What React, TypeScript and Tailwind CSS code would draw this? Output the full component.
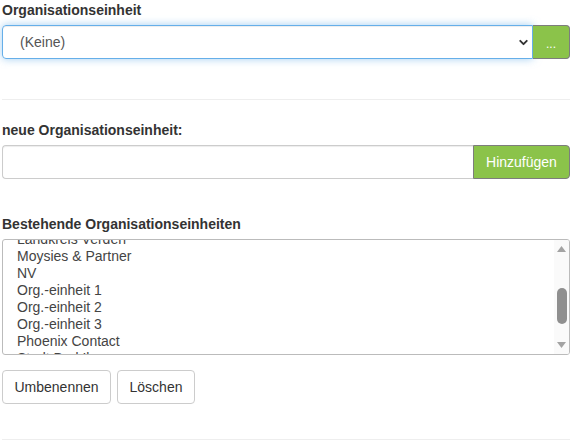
import { ChevronDown } from 'lucide-react';

const units = [
  'Landkreis Verden',
  'Moysies & Partner',
  'NV',
  'Org.-einheit 1',
  'Org.-einheit 2',
  'Org.-einheit 3',
  'Phoenix Contact',
  'Stadt Bad Iburg',
];

function Label({ children }: { children: React.ReactNode }) {
  return <label className="block h-5 text-[14px] font-bold leading-5 text-[#333]">{children}</label>;
}

function Scrollbar() {
  return (
    <div className="flex w-[15px] shrink-0 flex-col items-center bg-[#fafafa] pt-[6px] pb-[6px]">
      <svg width="9" height="6" viewBox="0 0 9 6">
        <path d="M0 6 L4.5 0 L9 6 Z" fill="#a3a3a3" />
      </svg>
      <div className="mt-[36px] h-[36px] w-[10px] rounded-full bg-[#8f8f8f]" />
      <div className="flex-1" />
      <svg width="9" height="6" viewBox="0 0 9 6">
        <path d="M0 0 L9 0 L4.5 6 Z" fill="#a3a3a3" />
      </svg>
    </div>
  );
}

export default function App() {
  return (
    <div className="min-h-[441px] bg-white" style={{ fontFamily: '"Liberation Sans", Arial, sans-serif' }}>
      <div className="ml-[2px] w-[568px]">
        <Label>Organisationseinheit</Label>
        <div className="mt-[5px] flex h-[34px]">
          <div className="flex flex-1 items-center rounded-l-[4px] border border-[#66afe9] pl-[17px] pr-[2px] text-[14px] text-[#555] shadow-[inset_0_1px_1px_rgba(0,0,0,0.075),0_0_8px_rgba(102,175,233,0.6)]">
            <span className="flex-1">(Keine)</span>
            <ChevronDown size={13} strokeWidth={3.5} className="text-[#333]" />
          </div>
          <button className="w-[37px] rounded-r-[4px] border border-l-0 border-[#7d7d7d] bg-[#8bc34a] pt-[3px] text-[12px] leading-none text-white">
            ...
          </button>
        </div>

        <hr className="mt-[40px] border-t border-[#eee]" />

        <div className="mt-[20px]">
          <Label>neue Organisationseinheit:</Label>
          <div className="mt-[5px] flex h-[34px]">
            <input
              type="text"
              className="flex-1 rounded-l-[4px] border border-r-0 border-[#ccc] px-3 text-[14px] text-[#555] shadow-[inset_0_1px_1px_rgba(0,0,0,0.075)] outline-none"
            />
            <button className="w-[97px] rounded-r-[4px] border border-[#7d7d7d] bg-[#8bc34a] text-[14px] text-white">
              Hinzufügen
            </button>
          </div>
        </div>

        <div className="mt-[35px]">
          <Label>Bestehende Organisationseinheiten</Label>
          <div className="mt-[5px] flex h-[116px] overflow-hidden rounded-[3px] border border-[#bbb]">
            <div className="flex-1 overflow-hidden pl-[14px]">
              <div className="-mt-[9px]">
                {units.map((unit) => (
                  <div key={unit} className="h-[17px] text-[14px] leading-[17px] text-[#444]">
                    {unit}
                  </div>
                ))}
              </div>
            </div>
            <Scrollbar />
          </div>
        </div>

        <div className="mt-[15px] flex gap-[6px]">
          <button className="h-[34px] w-[109px] rounded-[4px] border border-[#ccc] text-[14px] text-[#333]">Umbenennen</button>
          <button className="h-[34px] w-[78px] rounded-[4px] border border-[#ccc] text-[14px] text-[#333]">Löschen</button>
        </div>

        <hr className="mt-[35px] border-t border-[#eee]" />
      </div>
    </div>
  );
}
